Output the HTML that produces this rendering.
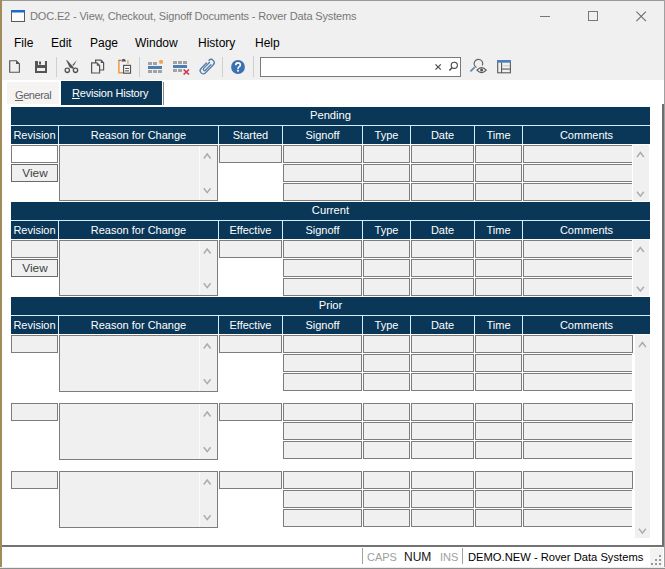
<!DOCTYPE html>
<html><head><meta charset="utf-8"><style>
html,body{margin:0;padding:0;}
body{width:665px;height:569px;position:relative;overflow:hidden;background:#fff;font-family:"Liberation Sans",sans-serif;}
div{box-sizing:content-box;white-space:nowrap;}
</style></head><body>
<!-- window frame -->
<div style="position:absolute;left:0;top:0;width:665px;height:80px;background:#f0f0f0"></div>
<div style="position:absolute;left:0;top:0;width:665px;height:1px;background:#9a9a9a"></div>
<div style="position:absolute;left:0;top:0;width:2px;height:569px;background:#a08b5c"></div>
<div style="position:absolute;left:664px;top:0;width:1px;height:569px;background:#a0a0a0"></div>
<div style="position:absolute;left:0;top:567px;width:665px;height:1px;background:#ececec"></div><div style="position:absolute;left:0;top:568px;width:665px;height:1px;background:#8c8c8c"></div>
<!-- title -->
<svg style="position:absolute;left:11px;top:10px" width="14" height="12"><rect x="0.5" y="0.5" width="13" height="11" fill="#fbfbfb" stroke="#595959" stroke-width="1"/><rect x="0" y="0" width="14" height="2.5" fill="#1e6ac8"/></svg>
<div style="position:absolute;left:30px;top:8px;height:16px;line-height:16px;font-size:11px;color:#777;letter-spacing:-0.15px">DOC.E2 - View, Checkout, Signoff Documents - Rover Data Systems</div>
<div style="position:absolute;left:540px;top:16px;width:10px;height:1px;background:#777"></div>
<div style="position:absolute;left:588px;top:11px;width:8px;height:8px;border:1px solid #777"></div>
<svg style="position:absolute;left:636px;top:11px" width="11" height="11"><path d="M0.4 0.6 L9.9 10.1 M9.9 0.6 L0.4 10.1" stroke="#6a6a6a" stroke-width="1.05"/></svg>
<!-- menu -->
<div style="position:absolute;left:14px;top:35px;font-size:12px;line-height:16px;color:#000">File</div>
<div style="position:absolute;left:51px;top:35px;font-size:12px;line-height:16px;color:#000">Edit</div>
<div style="position:absolute;left:90px;top:35px;font-size:12px;line-height:16px;color:#000">Page</div>
<div style="position:absolute;left:135px;top:35px;font-size:12px;line-height:16px;color:#000">Window</div>
<div style="position:absolute;left:198px;top:35px;font-size:12px;line-height:16px;color:#000">History</div>
<div style="position:absolute;left:255px;top:35px;font-size:12px;line-height:16px;color:#000">Help</div>
<!-- toolbar -->
<div style="position:absolute;left:260px;top:57px;width:199px;height:18px;background:#fff;border:1px solid #7a7a7a"></div>
<!-- toolbar icons -->
<svg style="position:absolute;left:0;top:50px" width="520" height="30" viewBox="0 50 520 30">
  <!-- new doc -->
  <path d="M9.7 60.7 H16.3 L19.4 63.8 V72.2 H9.7 Z" fill="#f0f0f0" stroke="#555" stroke-width="1.15" stroke-linejoin="miter"/>
  <path d="M16 60.5 V64 H19.6 Z" fill="#555"/>
  <!-- save -->
  <path d="M35 61 H47 V73 H35 Z" fill="#555"/>
  <rect x="38" y="61" width="7" height="4" fill="#f0f0f0"/>
  <rect x="39" y="61.5" width="2" height="3" fill="#555"/>
  <rect x="37" y="68" width="8" height="3" fill="#f0f0f0"/>
  <!-- separators -->
  <rect x="56" y="57" width="1" height="20" fill="#cfcfcf"/>
  <rect x="139" y="57" width="1" height="20" fill="#cfcfcf"/>
  <rect x="222" y="57" width="1" height="20" fill="#cfcfcf"/>
  <rect x="253" y="56" width="1" height="21" fill="#cfcfcf"/>
  <!-- scissors -->
  <path d="M66.1 60.1 L67.2 60.3 L74 67.7 L72.8 68.7 L69.6 67.6 Z" fill="#555"/>
  <path d="M76.7 60.2 L72.3 65 L73.7 65.8 L76.2 61.3 Z" fill="#555"/>
  <circle cx="67.3" cy="70.3" r="2.15" fill="none" stroke="#555" stroke-width="1.35"/>
  <circle cx="75.5" cy="70.3" r="2.15" fill="none" stroke="#555" stroke-width="1.35"/>
  <!-- copy -->
  <path d="M95.6 60.1 H101 L103.6 62.7 V70 H95.6 Z" fill="#f0f0f0" stroke="#555" stroke-width="1.2"/>
  <path d="M91.6 62.9 H97 L99.6 65.5 V73 H91.6 Z" fill="#f0f0f0" stroke="#555" stroke-width="1.2"/>
  <path d="M96.8 62.8 V65.7 H99.7 Z" fill="#555"/>
  <path d="M100.8 60 V62.9 H103.7 Z" fill="#555"/>
  <!-- paste -->
  <path d="M118.9 60.6 V72.8 H123" fill="none" stroke="#eb9a45" stroke-width="1.5"/>
  <path d="M118.3 60.3 H121" fill="none" stroke="#777" stroke-width="1.1"/>
  <path d="M127.9 60.3 V63.8" fill="none" stroke="#e2a060" stroke-width="1.4"/>
  <path d="M121.2 61.6 Q121.6 58.7 123.6 58.7 Q125.6 58.7 126 61.6 Z" fill="#555"/>
  <rect x="123.6" y="65.4" width="6.9" height="7.8" fill="#fff" stroke="#555" stroke-width="1.2"/>
  <rect x="125.1" y="67.9" width="3.9" height="1.1" fill="#555"/>
  <rect x="125.1" y="70.3" width="3.9" height="1.1" fill="#555"/>
  <!-- insert rows -->
  <rect x="148" y="62" width="4" height="3" fill="#a2a2a2"/>
  <rect x="153" y="62" width="4" height="3" fill="#a2a2a2"/>
  <rect x="159.2" y="60" width="3.8" height="3.8" rx="1.3" fill="#eca552"/>
  <rect x="148" y="66" width="14" height="3" fill="#4d7db5"/>
  <rect x="148" y="70" width="4" height="3" fill="#a2a2a2"/>
  <rect x="153" y="70" width="4" height="3" fill="#a2a2a2"/>
  <rect x="158" y="70" width="4" height="3" fill="#a2a2a2"/>
  <!-- delete rows -->
  <rect x="173" y="61" width="4" height="3" fill="#a2a2a2"/>
  <rect x="178" y="61" width="4" height="3" fill="#a2a2a2"/>
  <rect x="183" y="61" width="4" height="3" fill="#a2a2a2"/>
  <rect x="173" y="65" width="14" height="3" fill="#4d7db5"/>
  <rect x="173" y="69" width="4" height="3" fill="#a2a2a2"/>
  <rect x="178" y="69" width="4" height="3" fill="#a2a2a2"/>
  <path d="M183.6 69.5 L189 74.5 M189 69.5 L183.6 74.5" stroke="#cf3352" stroke-width="1.7"/>
  <!-- paperclip -->
  <g transform="translate(207.2,66.6) rotate(-46)" fill="none" stroke="#5479a6" stroke-width="1.25">
    <path d="M5.6 -3.1 A3.1 3.1 0 0 1 5.6 3.1 H-5.6 A3.1 3.1 0 0 1 -5.6 -3.1 H2" stroke-linecap="round"/>
    <path d="M4.8 -1.3 H-3.8 A1.3 1.3 0 0 0 -3.8 1.3 H4" fill="#d6ebf8" stroke-linecap="round"/>
  </g>
  <!-- help -->
  <circle cx="238" cy="67" r="6.9" fill="#3b70b1"/>
  <path d="M235.7 65.2 Q235.7 62.9 238 62.9 Q240.3 62.9 240.3 64.9 Q240.3 66.2 239 66.9 Q238 67.5 238 68.9" fill="none" stroke="#fff" stroke-width="1.6"/>
  <rect x="237.1" y="69.8" width="1.8" height="1.8" fill="#fff"/>
  <!-- search x and magnifier -->
  <path d="M435.5 64.3 L440.8 69.7 M440.8 64.3 L435.5 69.7" stroke="#4a4a4a" stroke-width="1.2"/>
  <circle cx="454.3" cy="65.3" r="3.1" fill="none" stroke="#444" stroke-width="1.1"/>
  <path d="M452 67.8 L449.4 70.6" stroke="#444" stroke-width="1.4"/>
  <!-- find with eye -->
  <path d="M482.3 65.6 A4.3 4.3 0 1 0 476.6 67.6" fill="none" stroke="#666" stroke-width="1.15"/>
  <path d="M474.6 67.4 L470.4 71.4" stroke="#5a86b4" stroke-width="1.7"/>
  <path d="M477 70.1 Q481.6 65.2 486.2 70.1 Q481.6 75 477 70.1 Z" fill="#f0f0f0" stroke="#555" stroke-width="1.2"/>
  <circle cx="481.6" cy="70.1" r="1.5" fill="#555"/>
  <!-- layout -->
  <rect x="497.7" y="60.8" width="12.7" height="12.0" fill="none" stroke="#5a5a5a" stroke-width="1.1"/>
  <rect x="497.1" y="60.2" width="13.9" height="2.5" fill="#4a7fc0"/>
  <rect x="501" y="62.5" width="1.1" height="10.5" fill="#5a5a5a"/>
  <rect x="502" y="68.5" width="8.2" height="1.1" fill="#5a5a5a"/>
  <rect x="503" y="65.2" width="6.5" height="1" fill="#c8c8c8"/>
</svg>

<!-- tabs -->
<div style="position:absolute;left:7px;top:82px;width:52px;height:22px;background:#f5f4f3"></div>
<div style="position:absolute;left:15px;top:87px;font-size:11px;line-height:16px;color:#626262;letter-spacing:-0.4px"><u>G</u>eneral</div>
<div style="position:absolute;left:61px;top:81px;width:101px;height:24px;background:#0a3757"></div><div style="position:absolute;left:163px;top:82px;width:1px;height:23px;background:#8a8a8a"></div>
<div style="position:absolute;left:72px;top:85px;font-size:11px;line-height:16px;color:#fff;letter-spacing:-0.2px"><u>R</u>evision History</div>
<!-- right panel line -->
<div style="position:absolute;left:662px;top:104px;width:2px;height:443px;background:#6e6e6e"></div>
<!-- status -->
<div style="position:absolute;left:2px;top:545px;width:662px;height:2px;background:#737373"></div>
<div style="position:absolute;left:362px;top:548px;width:1px;height:16px;background:#a0a0a0"></div>
<div style="position:absolute;left:462px;top:548px;width:1px;height:16px;background:#a0a0a0"></div>
<div style="position:absolute;left:367px;top:550px;font-size:11px;line-height:14px;color:#a0a0a0">CAPS</div>
<div style="position:absolute;left:404px;top:550px;font-size:12px;line-height:14px;color:#111">NUM</div>
<div style="position:absolute;left:440px;top:550px;font-size:11px;line-height:14px;color:#a0a0a0">INS</div>
<div style="position:absolute;left:468px;top:550px;font-size:11.5px;line-height:14px;color:#000;font-size:11.2px">DEMO.NEW - Rover Data Systems</div>
<div style="position:absolute;left:650px;top:548px;width:13px;height:19px;background:#f3f3f3"></div><div style="position:absolute;left:659px;top:555px;width:2px;height:2px;background:#9a9a9a"></div><div style="position:absolute;left:655px;top:559px;width:2px;height:2px;background:#9a9a9a"></div><div style="position:absolute;left:659px;top:559px;width:2px;height:2px;background:#9a9a9a"></div><div style="position:absolute;left:651px;top:563px;width:2px;height:2px;background:#9a9a9a"></div><div style="position:absolute;left:655px;top:563px;width:2px;height:2px;background:#9a9a9a"></div><div style="position:absolute;left:659px;top:563px;width:2px;height:2px;background:#9a9a9a"></div>
<div style="position:absolute;left:11px;top:107px;width:639px;height:18px;background:#0a3757"></div>
<div style="position:absolute;left:11px;top:107px;width:639px;height:17px;line-height:17px;text-align:center;color:#fff;font-size:11.2px;">Pending</div>
<div style="position:absolute;left:11px;top:125px;width:639px;height:1px;background:#d4eefa"></div>
<div style="position:absolute;left:11px;top:126px;width:47px;height:18px;background:#0a3757"></div>
<div style="position:absolute;left:11px;top:126px;width:47px;height:18px;line-height:18px;text-align:center;color:#fff;font-size:11px;">Revision</div>
<div style="position:absolute;left:59px;top:126px;width:159px;height:18px;background:#0a3757"></div>
<div style="position:absolute;left:59px;top:126px;width:159px;height:18px;line-height:18px;text-align:center;color:#fff;font-size:11px;">Reason for Change</div>
<div style="position:absolute;left:219px;top:126px;width:63px;height:18px;background:#0a3757"></div>
<div style="position:absolute;left:219px;top:126px;width:63px;height:18px;line-height:18px;text-align:center;color:#fff;font-size:11px;">Started</div>
<div style="position:absolute;left:283px;top:126px;width:79px;height:18px;background:#0a3757"></div>
<div style="position:absolute;left:283px;top:126px;width:79px;height:18px;line-height:18px;text-align:center;color:#fff;font-size:11px;">Signoff</div>
<div style="position:absolute;left:363px;top:126px;width:47px;height:18px;background:#0a3757"></div>
<div style="position:absolute;left:363px;top:126px;width:47px;height:18px;line-height:18px;text-align:center;color:#fff;font-size:11px;">Type</div>
<div style="position:absolute;left:411px;top:126px;width:63px;height:18px;background:#0a3757"></div>
<div style="position:absolute;left:411px;top:126px;width:63px;height:18px;line-height:18px;text-align:center;color:#fff;font-size:11px;">Date</div>
<div style="position:absolute;left:475px;top:126px;width:47px;height:18px;background:#0a3757"></div>
<div style="position:absolute;left:475px;top:126px;width:47px;height:18px;line-height:18px;text-align:center;color:#fff;font-size:11px;">Time</div>
<div style="position:absolute;left:523px;top:126px;width:127px;height:18px;background:#0a3757"></div>
<div style="position:absolute;left:523px;top:126px;width:127px;height:18px;line-height:18px;text-align:center;color:#fff;font-size:11px;">Comments</div>
<div style="position:absolute;left:58px;top:126px;width:1px;height:18px;background:#d4eefa"></div>
<div style="position:absolute;left:218px;top:126px;width:1px;height:18px;background:#d4eefa"></div>
<div style="position:absolute;left:282px;top:126px;width:1px;height:18px;background:#d4eefa"></div>
<div style="position:absolute;left:362px;top:126px;width:1px;height:18px;background:#d4eefa"></div>
<div style="position:absolute;left:410px;top:126px;width:1px;height:18px;background:#d4eefa"></div>
<div style="position:absolute;left:474px;top:126px;width:1px;height:18px;background:#d4eefa"></div>
<div style="position:absolute;left:522px;top:126px;width:1px;height:18px;background:#d4eefa"></div>
<div style="position:absolute;left:11px;top:145px;width:45px;height:16px;background:#ffffff;border:1px solid #7d7d7d;"></div>
<div style="position:absolute;left:11px;top:164px;width:45px;height:16px;background:#f0f0f0;border:1px solid #6a6a6a;"></div>
<div style="position:absolute;left:11.5px;top:164px;width:47px;height:18px;line-height:18px;text-align:center;color:#404040;font-size:11.8px;">View</div>
<div style="position:absolute;left:59px;top:145px;width:157px;height:54px;background:#f0f0f0;border:1px solid #7d7d7d;"></div>
<div style="position:absolute;left:199px;top:146px;width:1px;height:54px;background:#fbfbfb"></div>
<div style="position:absolute;left:219px;top:145px;width:61px;height:16px;background:#f0f0f0;border:1px solid #7d7d7d;"></div>
<div style="position:absolute;left:283px;top:145px;width:77px;height:16px;background:#f0f0f0;border:1px solid #7d7d7d;"></div>
<div style="position:absolute;left:363px;top:145px;width:45px;height:16px;background:#f0f0f0;border:1px solid #7d7d7d;"></div>
<div style="position:absolute;left:411px;top:145px;width:61px;height:16px;background:#f0f0f0;border:1px solid #7d7d7d;"></div>
<div style="position:absolute;left:475px;top:145px;width:45px;height:16px;background:#f0f0f0;border:1px solid #7d7d7d;"></div>
<div style="position:absolute;left:523px;top:145px;width:108px;height:16px;background:#f0f0f0;border:1px solid #7d7d7d;border-right:none;"></div>
<div style="position:absolute;left:283px;top:164px;width:77px;height:16px;background:#f0f0f0;border:1px solid #7d7d7d;"></div>
<div style="position:absolute;left:363px;top:164px;width:45px;height:16px;background:#f0f0f0;border:1px solid #7d7d7d;"></div>
<div style="position:absolute;left:411px;top:164px;width:61px;height:16px;background:#f0f0f0;border:1px solid #7d7d7d;"></div>
<div style="position:absolute;left:475px;top:164px;width:45px;height:16px;background:#f0f0f0;border:1px solid #7d7d7d;"></div>
<div style="position:absolute;left:523px;top:164px;width:108px;height:16px;background:#f0f0f0;border:1px solid #7d7d7d;border-right:none;"></div>
<div style="position:absolute;left:283px;top:183px;width:77px;height:16px;background:#f0f0f0;border:1px solid #7d7d7d;"></div>
<div style="position:absolute;left:363px;top:183px;width:45px;height:16px;background:#f0f0f0;border:1px solid #7d7d7d;"></div>
<div style="position:absolute;left:411px;top:183px;width:61px;height:16px;background:#f0f0f0;border:1px solid #7d7d7d;"></div>
<div style="position:absolute;left:475px;top:183px;width:45px;height:16px;background:#f0f0f0;border:1px solid #7d7d7d;"></div>
<div style="position:absolute;left:523px;top:183px;width:108px;height:16px;background:#f0f0f0;border:1px solid #7d7d7d;border-right:none;"></div>
<div style="position:absolute;left:633px;top:145px;width:16px;height:56px;background:#f0f0f0"></div>
<div style="position:absolute;left:11px;top:202px;width:639px;height:18px;background:#0a3757"></div>
<div style="position:absolute;left:11px;top:202px;width:639px;height:17px;line-height:17px;text-align:center;color:#fff;font-size:11.2px;">Current</div>
<div style="position:absolute;left:11px;top:220px;width:639px;height:1px;background:#d4eefa"></div>
<div style="position:absolute;left:11px;top:221px;width:47px;height:18px;background:#0a3757"></div>
<div style="position:absolute;left:11px;top:221px;width:47px;height:18px;line-height:18px;text-align:center;color:#fff;font-size:11px;">Revision</div>
<div style="position:absolute;left:59px;top:221px;width:159px;height:18px;background:#0a3757"></div>
<div style="position:absolute;left:59px;top:221px;width:159px;height:18px;line-height:18px;text-align:center;color:#fff;font-size:11px;">Reason for Change</div>
<div style="position:absolute;left:219px;top:221px;width:63px;height:18px;background:#0a3757"></div>
<div style="position:absolute;left:219px;top:221px;width:63px;height:18px;line-height:18px;text-align:center;color:#fff;font-size:11px;">Effective</div>
<div style="position:absolute;left:283px;top:221px;width:79px;height:18px;background:#0a3757"></div>
<div style="position:absolute;left:283px;top:221px;width:79px;height:18px;line-height:18px;text-align:center;color:#fff;font-size:11px;">Signoff</div>
<div style="position:absolute;left:363px;top:221px;width:47px;height:18px;background:#0a3757"></div>
<div style="position:absolute;left:363px;top:221px;width:47px;height:18px;line-height:18px;text-align:center;color:#fff;font-size:11px;">Type</div>
<div style="position:absolute;left:411px;top:221px;width:63px;height:18px;background:#0a3757"></div>
<div style="position:absolute;left:411px;top:221px;width:63px;height:18px;line-height:18px;text-align:center;color:#fff;font-size:11px;">Date</div>
<div style="position:absolute;left:475px;top:221px;width:47px;height:18px;background:#0a3757"></div>
<div style="position:absolute;left:475px;top:221px;width:47px;height:18px;line-height:18px;text-align:center;color:#fff;font-size:11px;">Time</div>
<div style="position:absolute;left:523px;top:221px;width:127px;height:18px;background:#0a3757"></div>
<div style="position:absolute;left:523px;top:221px;width:127px;height:18px;line-height:18px;text-align:center;color:#fff;font-size:11px;">Comments</div>
<div style="position:absolute;left:58px;top:221px;width:1px;height:18px;background:#d4eefa"></div>
<div style="position:absolute;left:218px;top:221px;width:1px;height:18px;background:#d4eefa"></div>
<div style="position:absolute;left:282px;top:221px;width:1px;height:18px;background:#d4eefa"></div>
<div style="position:absolute;left:362px;top:221px;width:1px;height:18px;background:#d4eefa"></div>
<div style="position:absolute;left:410px;top:221px;width:1px;height:18px;background:#d4eefa"></div>
<div style="position:absolute;left:474px;top:221px;width:1px;height:18px;background:#d4eefa"></div>
<div style="position:absolute;left:522px;top:221px;width:1px;height:18px;background:#d4eefa"></div>
<div style="position:absolute;left:11px;top:240px;width:45px;height:16px;background:#f0f0f0;border:1px solid #7d7d7d;"></div>
<div style="position:absolute;left:11px;top:259px;width:45px;height:16px;background:#f0f0f0;border:1px solid #6a6a6a;"></div>
<div style="position:absolute;left:11.5px;top:259px;width:47px;height:18px;line-height:18px;text-align:center;color:#404040;font-size:11.8px;">View</div>
<div style="position:absolute;left:59px;top:240px;width:157px;height:54px;background:#f0f0f0;border:1px solid #7d7d7d;"></div>
<div style="position:absolute;left:199px;top:241px;width:1px;height:54px;background:#fbfbfb"></div>
<div style="position:absolute;left:219px;top:240px;width:61px;height:16px;background:#f0f0f0;border:1px solid #7d7d7d;"></div>
<div style="position:absolute;left:283px;top:240px;width:77px;height:16px;background:#f0f0f0;border:1px solid #7d7d7d;"></div>
<div style="position:absolute;left:363px;top:240px;width:45px;height:16px;background:#f0f0f0;border:1px solid #7d7d7d;"></div>
<div style="position:absolute;left:411px;top:240px;width:61px;height:16px;background:#f0f0f0;border:1px solid #7d7d7d;"></div>
<div style="position:absolute;left:475px;top:240px;width:45px;height:16px;background:#f0f0f0;border:1px solid #7d7d7d;"></div>
<div style="position:absolute;left:523px;top:240px;width:108px;height:16px;background:#f0f0f0;border:1px solid #7d7d7d;border-right:none;"></div>
<div style="position:absolute;left:283px;top:259px;width:77px;height:16px;background:#f0f0f0;border:1px solid #7d7d7d;"></div>
<div style="position:absolute;left:363px;top:259px;width:45px;height:16px;background:#f0f0f0;border:1px solid #7d7d7d;"></div>
<div style="position:absolute;left:411px;top:259px;width:61px;height:16px;background:#f0f0f0;border:1px solid #7d7d7d;"></div>
<div style="position:absolute;left:475px;top:259px;width:45px;height:16px;background:#f0f0f0;border:1px solid #7d7d7d;"></div>
<div style="position:absolute;left:523px;top:259px;width:108px;height:16px;background:#f0f0f0;border:1px solid #7d7d7d;border-right:none;"></div>
<div style="position:absolute;left:283px;top:278px;width:77px;height:16px;background:#f0f0f0;border:1px solid #7d7d7d;"></div>
<div style="position:absolute;left:363px;top:278px;width:45px;height:16px;background:#f0f0f0;border:1px solid #7d7d7d;"></div>
<div style="position:absolute;left:411px;top:278px;width:61px;height:16px;background:#f0f0f0;border:1px solid #7d7d7d;"></div>
<div style="position:absolute;left:475px;top:278px;width:45px;height:16px;background:#f0f0f0;border:1px solid #7d7d7d;"></div>
<div style="position:absolute;left:523px;top:278px;width:108px;height:16px;background:#f0f0f0;border:1px solid #7d7d7d;border-right:none;"></div>
<div style="position:absolute;left:633px;top:240px;width:16px;height:56px;background:#f0f0f0"></div>
<div style="position:absolute;left:11px;top:297px;width:639px;height:18px;background:#0a3757"></div>
<div style="position:absolute;left:11px;top:297px;width:639px;height:17px;line-height:17px;text-align:center;color:#fff;font-size:11.2px;">Prior</div>
<div style="position:absolute;left:11px;top:315px;width:639px;height:1px;background:#d4eefa"></div>
<div style="position:absolute;left:11px;top:316px;width:47px;height:18px;background:#0a3757"></div>
<div style="position:absolute;left:11px;top:316px;width:47px;height:18px;line-height:18px;text-align:center;color:#fff;font-size:11px;">Revision</div>
<div style="position:absolute;left:59px;top:316px;width:159px;height:18px;background:#0a3757"></div>
<div style="position:absolute;left:59px;top:316px;width:159px;height:18px;line-height:18px;text-align:center;color:#fff;font-size:11px;">Reason for Change</div>
<div style="position:absolute;left:219px;top:316px;width:63px;height:18px;background:#0a3757"></div>
<div style="position:absolute;left:219px;top:316px;width:63px;height:18px;line-height:18px;text-align:center;color:#fff;font-size:11px;">Effective</div>
<div style="position:absolute;left:283px;top:316px;width:79px;height:18px;background:#0a3757"></div>
<div style="position:absolute;left:283px;top:316px;width:79px;height:18px;line-height:18px;text-align:center;color:#fff;font-size:11px;">Signoff</div>
<div style="position:absolute;left:363px;top:316px;width:47px;height:18px;background:#0a3757"></div>
<div style="position:absolute;left:363px;top:316px;width:47px;height:18px;line-height:18px;text-align:center;color:#fff;font-size:11px;">Type</div>
<div style="position:absolute;left:411px;top:316px;width:63px;height:18px;background:#0a3757"></div>
<div style="position:absolute;left:411px;top:316px;width:63px;height:18px;line-height:18px;text-align:center;color:#fff;font-size:11px;">Date</div>
<div style="position:absolute;left:475px;top:316px;width:47px;height:18px;background:#0a3757"></div>
<div style="position:absolute;left:475px;top:316px;width:47px;height:18px;line-height:18px;text-align:center;color:#fff;font-size:11px;">Time</div>
<div style="position:absolute;left:523px;top:316px;width:127px;height:18px;background:#0a3757"></div>
<div style="position:absolute;left:523px;top:316px;width:127px;height:18px;line-height:18px;text-align:center;color:#fff;font-size:11px;">Comments</div>
<div style="position:absolute;left:58px;top:316px;width:1px;height:18px;background:#d4eefa"></div>
<div style="position:absolute;left:218px;top:316px;width:1px;height:18px;background:#d4eefa"></div>
<div style="position:absolute;left:282px;top:316px;width:1px;height:18px;background:#d4eefa"></div>
<div style="position:absolute;left:362px;top:316px;width:1px;height:18px;background:#d4eefa"></div>
<div style="position:absolute;left:410px;top:316px;width:1px;height:18px;background:#d4eefa"></div>
<div style="position:absolute;left:474px;top:316px;width:1px;height:18px;background:#d4eefa"></div>
<div style="position:absolute;left:522px;top:316px;width:1px;height:18px;background:#d4eefa"></div>
<div style="position:absolute;left:11px;top:335px;width:45px;height:16px;background:#f0f0f0;border:1px solid #7d7d7d;"></div>
<div style="position:absolute;left:59px;top:335px;width:157px;height:55px;background:#f0f0f0;border:1px solid #7d7d7d;"></div>
<div style="position:absolute;left:199px;top:336px;width:1px;height:55px;background:#fbfbfb"></div>
<div style="position:absolute;left:219px;top:335px;width:61px;height:16px;background:#f0f0f0;border:1px solid #7d7d7d;"></div>
<div style="position:absolute;left:283px;top:335px;width:77px;height:16px;background:#f0f0f0;border:1px solid #7d7d7d;"></div>
<div style="position:absolute;left:363px;top:335px;width:45px;height:16px;background:#f0f0f0;border:1px solid #7d7d7d;"></div>
<div style="position:absolute;left:411px;top:335px;width:61px;height:16px;background:#f0f0f0;border:1px solid #7d7d7d;"></div>
<div style="position:absolute;left:475px;top:335px;width:45px;height:16px;background:#f0f0f0;border:1px solid #7d7d7d;"></div>
<div style="position:absolute;left:523px;top:335px;width:108px;height:16px;background:#f0f0f0;border:1px solid #7d7d7d;"></div>
<div style="position:absolute;left:283px;top:354px;width:77px;height:16px;background:#f0f0f0;border:1px solid #7d7d7d;"></div>
<div style="position:absolute;left:363px;top:354px;width:45px;height:16px;background:#f0f0f0;border:1px solid #7d7d7d;"></div>
<div style="position:absolute;left:411px;top:354px;width:61px;height:16px;background:#f0f0f0;border:1px solid #7d7d7d;"></div>
<div style="position:absolute;left:475px;top:354px;width:45px;height:16px;background:#f0f0f0;border:1px solid #7d7d7d;"></div>
<div style="position:absolute;left:523px;top:354px;width:108px;height:16px;background:#f0f0f0;border:1px solid #7d7d7d;border-right:none;"></div>
<div style="position:absolute;left:283px;top:373px;width:77px;height:16px;background:#f0f0f0;border:1px solid #7d7d7d;"></div>
<div style="position:absolute;left:363px;top:373px;width:45px;height:16px;background:#f0f0f0;border:1px solid #7d7d7d;"></div>
<div style="position:absolute;left:411px;top:373px;width:61px;height:16px;background:#f0f0f0;border:1px solid #7d7d7d;"></div>
<div style="position:absolute;left:475px;top:373px;width:45px;height:16px;background:#f0f0f0;border:1px solid #7d7d7d;"></div>
<div style="position:absolute;left:523px;top:373px;width:108px;height:16px;background:#f0f0f0;border:1px solid #7d7d7d;border-right:none;"></div>
<div style="position:absolute;left:11px;top:403px;width:45px;height:16px;background:#f0f0f0;border:1px solid #7d7d7d;"></div>
<div style="position:absolute;left:59px;top:403px;width:157px;height:55px;background:#f0f0f0;border:1px solid #7d7d7d;"></div>
<div style="position:absolute;left:199px;top:404px;width:1px;height:55px;background:#fbfbfb"></div>
<div style="position:absolute;left:219px;top:403px;width:61px;height:16px;background:#f0f0f0;border:1px solid #7d7d7d;"></div>
<div style="position:absolute;left:283px;top:403px;width:77px;height:16px;background:#f0f0f0;border:1px solid #7d7d7d;"></div>
<div style="position:absolute;left:363px;top:403px;width:45px;height:16px;background:#f0f0f0;border:1px solid #7d7d7d;"></div>
<div style="position:absolute;left:411px;top:403px;width:61px;height:16px;background:#f0f0f0;border:1px solid #7d7d7d;"></div>
<div style="position:absolute;left:475px;top:403px;width:45px;height:16px;background:#f0f0f0;border:1px solid #7d7d7d;"></div>
<div style="position:absolute;left:523px;top:403px;width:108px;height:16px;background:#f0f0f0;border:1px solid #7d7d7d;"></div>
<div style="position:absolute;left:283px;top:422px;width:77px;height:16px;background:#f0f0f0;border:1px solid #7d7d7d;"></div>
<div style="position:absolute;left:363px;top:422px;width:45px;height:16px;background:#f0f0f0;border:1px solid #7d7d7d;"></div>
<div style="position:absolute;left:411px;top:422px;width:61px;height:16px;background:#f0f0f0;border:1px solid #7d7d7d;"></div>
<div style="position:absolute;left:475px;top:422px;width:45px;height:16px;background:#f0f0f0;border:1px solid #7d7d7d;"></div>
<div style="position:absolute;left:523px;top:422px;width:108px;height:16px;background:#f0f0f0;border:1px solid #7d7d7d;border-right:none;"></div>
<div style="position:absolute;left:283px;top:441px;width:77px;height:16px;background:#f0f0f0;border:1px solid #7d7d7d;"></div>
<div style="position:absolute;left:363px;top:441px;width:45px;height:16px;background:#f0f0f0;border:1px solid #7d7d7d;"></div>
<div style="position:absolute;left:411px;top:441px;width:61px;height:16px;background:#f0f0f0;border:1px solid #7d7d7d;"></div>
<div style="position:absolute;left:475px;top:441px;width:45px;height:16px;background:#f0f0f0;border:1px solid #7d7d7d;"></div>
<div style="position:absolute;left:523px;top:441px;width:108px;height:16px;background:#f0f0f0;border:1px solid #7d7d7d;border-right:none;"></div>
<div style="position:absolute;left:11px;top:471px;width:45px;height:16px;background:#f0f0f0;border:1px solid #7d7d7d;"></div>
<div style="position:absolute;left:59px;top:471px;width:157px;height:55px;background:#f0f0f0;border:1px solid #7d7d7d;"></div>
<div style="position:absolute;left:199px;top:472px;width:1px;height:55px;background:#fbfbfb"></div>
<div style="position:absolute;left:219px;top:471px;width:61px;height:16px;background:#f0f0f0;border:1px solid #7d7d7d;"></div>
<div style="position:absolute;left:283px;top:471px;width:77px;height:16px;background:#f0f0f0;border:1px solid #7d7d7d;"></div>
<div style="position:absolute;left:363px;top:471px;width:45px;height:16px;background:#f0f0f0;border:1px solid #7d7d7d;"></div>
<div style="position:absolute;left:411px;top:471px;width:61px;height:16px;background:#f0f0f0;border:1px solid #7d7d7d;"></div>
<div style="position:absolute;left:475px;top:471px;width:45px;height:16px;background:#f0f0f0;border:1px solid #7d7d7d;"></div>
<div style="position:absolute;left:523px;top:471px;width:108px;height:16px;background:#f0f0f0;border:1px solid #7d7d7d;"></div>
<div style="position:absolute;left:283px;top:490px;width:77px;height:16px;background:#f0f0f0;border:1px solid #7d7d7d;"></div>
<div style="position:absolute;left:363px;top:490px;width:45px;height:16px;background:#f0f0f0;border:1px solid #7d7d7d;"></div>
<div style="position:absolute;left:411px;top:490px;width:61px;height:16px;background:#f0f0f0;border:1px solid #7d7d7d;"></div>
<div style="position:absolute;left:475px;top:490px;width:45px;height:16px;background:#f0f0f0;border:1px solid #7d7d7d;"></div>
<div style="position:absolute;left:523px;top:490px;width:108px;height:16px;background:#f0f0f0;border:1px solid #7d7d7d;border-right:none;"></div>
<div style="position:absolute;left:283px;top:509px;width:77px;height:16px;background:#f0f0f0;border:1px solid #7d7d7d;"></div>
<div style="position:absolute;left:363px;top:509px;width:45px;height:16px;background:#f0f0f0;border:1px solid #7d7d7d;"></div>
<div style="position:absolute;left:411px;top:509px;width:61px;height:16px;background:#f0f0f0;border:1px solid #7d7d7d;"></div>
<div style="position:absolute;left:475px;top:509px;width:45px;height:16px;background:#f0f0f0;border:1px solid #7d7d7d;"></div>
<div style="position:absolute;left:523px;top:509px;width:108px;height:16px;background:#f0f0f0;border:1px solid #7d7d7d;border-right:none;"></div>
<div style="position:absolute;left:635px;top:335px;width:15px;height:203px;background:#f0f0f0"></div><svg style="position:absolute;left:0;top:0" width="665" height="569"><path d="M203.80 158.50 L207.20 154.10 L210.60 158.50 M203.80 188.20 L207.20 192.60 L210.60 188.20 M637.00 157.00 L640.40 152.60 L643.80 157.00 M637.00 191.70 L640.40 196.10 L643.80 191.70 M203.80 253.50 L207.20 249.10 L210.60 253.50 M203.80 283.20 L207.20 287.60 L210.60 283.20 M637.00 252.00 L640.40 247.60 L643.80 252.00 M637.00 286.70 L640.40 291.10 L643.80 286.70 M203.80 348.50 L207.20 344.10 L210.60 348.50 M203.80 379.20 L207.20 383.60 L210.60 379.20 M203.80 416.50 L207.20 412.10 L210.60 416.50 M203.80 447.20 L207.20 451.60 L210.60 447.20 M203.80 484.50 L207.20 480.10 L210.60 484.50 M203.80 515.20 L207.20 519.60 L210.60 515.20 M639.00 347.00 L642.40 342.60 L645.80 347.00 M639.00 528.70 L642.40 533.10 L645.80 528.70" fill="none" stroke="#ababab" stroke-width="1.5"/></svg>
</body></html>
